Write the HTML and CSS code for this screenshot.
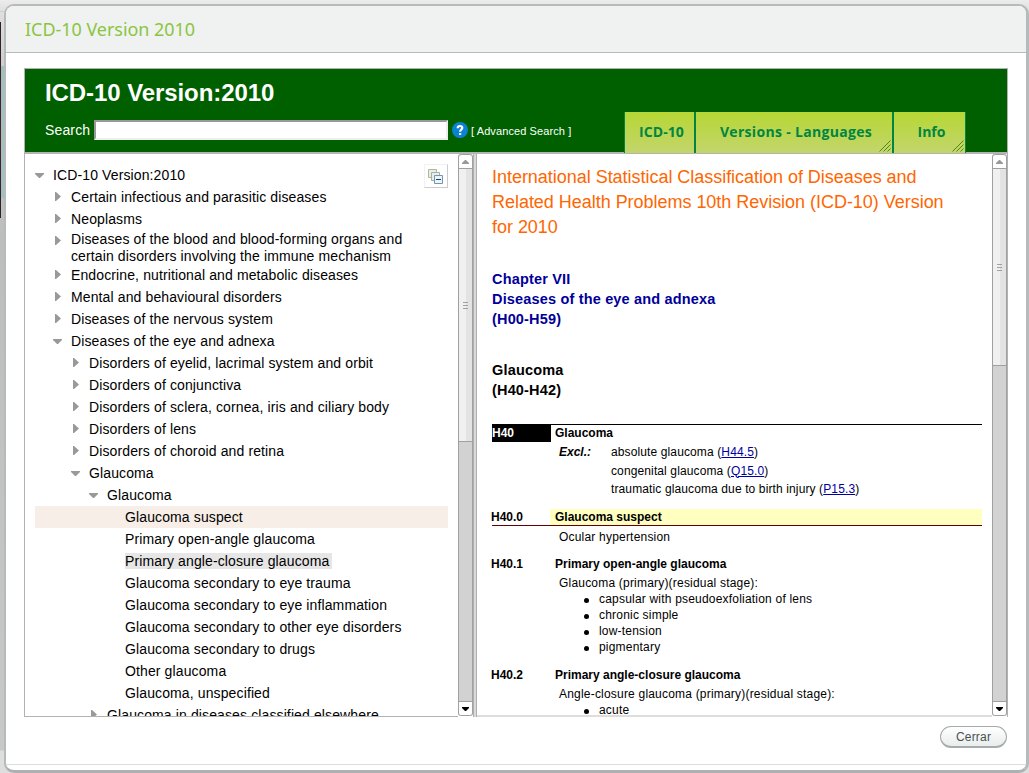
FILE: index.html
```html
<!DOCTYPE html>
<html lang="en">
<head>
<meta charset="utf-8">
<title>ICD-10 Version 2010</title>
<link rel="stylesheet" href="styles.css">
</head>
<body>
<svg width="0" height="0" class="defs">
  <symbol id="right" viewBox="0 0 9 9"><path d="M2 0h1l5 4.500-5 4.500h-1z" fill="#999"/></symbol>
  <symbol id="down" viewBox="0 0 9 9"><path d="M0 2h9v1L5 7H4L0 3z" fill="#999"/></symbol>
  <symbol id="grip" viewBox="0 0 12 12"><path d="M.5 11.500l11-11M4.500 11.500l7-7M8.500 11.500l3-3" stroke="#4c8a12" fill="none"/></symbol>
</svg>
<div class="dialog">
  <div class="dialog-head">ICD-10 Version 2010</div>
  <div class="frame">
    <header class="banner">
      <div class="left">
        <h1>ICD-10 Version:2010</h1>
        <div class="search">
          <label>Search</label><span class="field"></span>
          <svg class="help" width="16" height="16" viewBox="0 0 16 16"><circle cx="8" cy="8" r="8" fill="#0b83d0"/><path d="M5.700 6.200C5.700 3.200 10.500 3.400 10.300 6C10.200 7.600 8.100 7.600 8.100 9.800" fill="none" stroke="#fff" stroke-width="2.200"/><rect x="7" y="11" width="2.200" height="2" fill="#fff"/></svg>
          <span class="adv">[ Advanced Search ]</span>
        </div>
      </div>
      <nav class="tabs">
        <span class="tab t1">ICD-10</span>
        <span class="tab t2">Versions - Languages<svg class="grip" width="12" height="12"><use href="#grip"/></svg></span>
        <span class="tab t3">Info<svg class="grip" width="12" height="12"><use href="#grip"/></svg></span>
      </nav>
    </header>
    <div class="panes">
      <div class="tree">
        <span class="collapse"><svg width="16" height="16" viewBox="0 0 16 16"><g stroke-width="1"><path d="M.5.500h8v8h-8z" fill="#dff1f5" stroke="#b9b48a"/><path d="M3.500 3.500h8v8h-8z" fill="#dff1f5" stroke="#b0ad91"/><path d="M6.500 6.500h8v8h-8z" fill="#e9f6fb" stroke="#7a93ad"/></g><path d="M8 10h5v1H8z" fill="#14406b"/></svg></span>
        <div class="row d0"><svg class="arr"><use href="#down"/></svg><span>ICD-10 Version:2010</span></div>
        <div class="row d1"><svg class="arr r"><use href="#right"/></svg><span>Certain infectious and parasitic diseases</span></div>
        <div class="row d1"><svg class="arr r"><use href="#right"/></svg><span>Neoplasms</span></div>
        <div class="row d1 two"><svg class="arr r"><use href="#right"/></svg><span>Diseases of the blood and blood-forming organs and<br>certain disorders involving the immune mechanism</span></div>
        <div class="row d1"><svg class="arr r"><use href="#right"/></svg><span>Endocrine, nutritional and metabolic diseases</span></div>
        <div class="row d1"><svg class="arr r"><use href="#right"/></svg><span>Mental and behavioural disorders</span></div>
        <div class="row d1"><svg class="arr r"><use href="#right"/></svg><span>Diseases of the nervous system</span></div>
        <div class="row d1"><svg class="arr"><use href="#down"/></svg><span>Diseases of the eye and adnexa</span></div>
        <div class="row d2"><svg class="arr r"><use href="#right"/></svg><span>Disorders of eyelid, lacrimal system and orbit</span></div>
        <div class="row d2"><svg class="arr r"><use href="#right"/></svg><span>Disorders of conjunctiva</span></div>
        <div class="row d2"><svg class="arr r"><use href="#right"/></svg><span>Disorders of sclera, cornea, iris and ciliary body</span></div>
        <div class="row d2"><svg class="arr r"><use href="#right"/></svg><span>Disorders of lens</span></div>
        <div class="row d2"><svg class="arr r"><use href="#right"/></svg><span>Disorders of choroid and retina</span></div>
        <div class="row d2"><svg class="arr"><use href="#down"/></svg><span>Glaucoma</span></div>
        <div class="row d3"><svg class="arr"><use href="#down"/></svg><span>Glaucoma</span></div>
        <div class="row d4 selected"><span>Glaucoma suspect</span></div>
        <div class="row d4"><span>Primary open-angle glaucoma</span></div>
        <div class="row d4"><span class="hover">Primary angle-closure glaucoma</span></div>
        <div class="row d4"><span>Glaucoma secondary to eye trauma</span></div>
        <div class="row d4"><span>Glaucoma secondary to eye inflammation</span></div>
        <div class="row d4"><span>Glaucoma secondary to other eye disorders</span></div>
        <div class="row d4"><span>Glaucoma secondary to drugs</span></div>
        <div class="row d4"><span>Other glaucoma</span></div>
        <div class="row d4"><span>Glaucoma, unspecified</span></div>
        <div class="row d3"><svg class="arr r"><use href="#right"/></svg><span>Glaucoma in diseases classified elsewhere</span></div>
      </div>
      <div class="bar">
        <div class="btn"><svg width="7" height="4"><path d="M0 4V3L3 0h1l3 3v1z" fill="#999"/></svg></div>
        <div class="thumb long"><i></i><i></i><i></i></div>
        <div class="track"></div>
        <div class="btn low"><svg width="7" height="4"><path d="M0 0h7v1L4 4H3L0 1z"/></svg></div>
      </div>
      <div class="split"></div>
      <main class="content">
        <h2>International Statistical Classification of Diseases and<br>Related Health Problems 10th Revision (ICD-10) Version<br>for 2010</h2>
        <h3 class="chapter">Chapter VII<br>Diseases of the eye and adnexa<br>(H00-H59)</h3>
        <h3 class="block">Glaucoma<br>(H40-H42)</h3>
        <section class="category">
          <div class="cat"><b class="code">H40</b><b class="name">Glaucoma</b></div>
          <div class="excl"><b>Excl.:</b><p>absolute glaucoma (<a>H44.5</a>)<br>congenital glaucoma (<a>Q15.0</a>)<br>traumatic glaucoma due to birth injury (<a>P15.3</a>)</p></div>
        </section>
        <section class="entry current">
          <div class="title"><b class="code">H40.0</b><b class="name">Glaucoma suspect</b></div>
          <p>Ocular hypertension</p>
        </section>
        <section class="entry">
          <div class="title"><b class="code">H40.1</b><b class="name">Primary open-angle glaucoma</b></div>
          <p>Glaucoma (primary)(residual stage):</p>
          <ul><li>capsular with pseudoexfoliation of lens</li><li>chronic simple</li><li>low-tension</li><li>pigmentary</li></ul>
        </section>
        <section class="entry last">
          <div class="title"><b class="code">H40.2</b><b class="name">Primary angle-closure glaucoma</b></div>
          <p>Angle-closure glaucoma (primary)(residual stage):</p>
          <ul><li>acute</li></ul>
        </section>
      </main>
      <div class="bar">
        <div class="btn"><svg width="7" height="4"><path d="M0 4V3L3 0h1l3 3v1z" fill="#999"/></svg></div>
        <div class="thumb short"><i></i><i></i><i></i></div>
        <div class="track"></div>
        <div class="btn low"><svg width="7" height="4"><path d="M0 0h7v1L4 4H3L0 1z"/></svg></div>
      </div>
    </div>
  </div>
  <div class="actions"><button>Cerrar</button></div>
  <div class="foot"></div>
</div>
</body>
</html>
```
FILE: styles.css
```css
* { box-sizing: border-box; margin: 0; padding: 0; }
body {
  width: 1029px; height: 773px; overflow: hidden; padding: 4px 0 0 4px;
  font-family: "Liberation Sans", Arial, sans-serif; color: #000;
  background:
    linear-gradient(#2b2325, #4a2328 60%, #2b2325) 0 22px / 1px 196px no-repeat,
    linear-gradient(#a3bfc0, #a3bfc0) 1px 66px / 3px 132px no-repeat,
    linear-gradient(#c5d3c5, #c5d3c5) 0 11px / 1029px 1px no-repeat,
    linear-gradient(#ececec, #e0e0e0 10px, #d0d0d0 60px, #bdbdbd 240px, #c8c8c8 750px, #dedede 751px);
}
.defs { display: none; }
.dialog {
  width: 1025px; height: 769px; border: 2px solid #b5baba; border-right-width: 3px; border-bottom: 3px solid #adb1b2;
  border-radius: 10px; background: #fff; overflow: hidden; display: flex; flex-direction: column;
}
.dialog-head {
  flex: none; height: 47px; border-bottom: 1px solid #b5baba; background: #f0f2f2;
  padding: 1px 0 0 19px; line-height: 45px; font-family: "Noto Sans", sans-serif; font-size: 18px; letter-spacing: -.04px; color: #8ac53f;
}
.frame { flex: none; width: 984px; height: 649px; margin: 15px 0 0 18px; border: 1px solid #b2b2b2; border-bottom: 0; display: flex; flex-direction: column; }
.banner { flex: none; height: 83px; background: #006000; color: #fff; display: flex; }
.left { width: 599px; padding-left: 20px; }
h1 { font-size: 24px; letter-spacing: -.08px; line-height: 28px; margin-top: 10px; }
.search { display: flex; align-items: center; height: 20px; margin-top: 13px; font-size: 14px; }
.search label { width: 49px; letter-spacing: .15px; }
.field { width: 354px; height: 20px; background: #fff; border: 2px solid; border-color: #999 #eee #eee #999; }
.help { margin-left: 4px; }
.adv { margin-left: 3px; font-size: 11px; letter-spacing: .1px; padding-top: 1px; }
.tabs { display: flex; height: 41px; margin-top: 43px; }
.tab {
  position: relative; border-left: 2px solid #008542; background: linear-gradient(#b6d734, #c3d56c);
  color: #008542; font: bold 14px/40px "Open Sans", sans-serif; letter-spacing: .32px; text-align: center;
}
.t1 { width: 70px; border-left-width: 1px; letter-spacing: .08px; padding-left: 4px; }
.t2 { width: 198px; padding-left: 4px; }
.t3 { width: 74px; border-right: 1px solid #008542; letter-spacing: 0; padding-left: 4px; }
.grip { position: absolute; right: 1px; bottom: 1px; }
.panes { flex: 1; min-height: 0; display: flex; border-top: 2px solid #b4b4b4; }
.tree { position: relative; width: 433px; height: 563px; padding: 10px 10px 0; overflow: hidden; border-bottom: 1px solid #b2b2b2; font-size: 14px; letter-spacing: .12px; }
.collapse { position: absolute; left: 399px; top: 10px; width: 24px; height: 24px; border: 1px solid #f2f2f2; border-right-color: #ccc; border-bottom-color: #ccc; padding: 4px 0 0 3px; }
.collapse svg { display: block; }
.row { display: flex; height: 22px; line-height: 22px; align-items: center; white-space: nowrap; }
.arr { flex: none; width: 9px; height: 9px; margin-right: 9px; }
.arr.r { position: relative; top: -1px; }
.two { height: 34px; line-height: 17px; align-items: flex-start; }
.two .arr { margin-top: 7px; }
.two span { padding-top: 1px; }
.d1 { padding-left: 18px; }
.d2 { padding-left: 36px; }
.d3 { padding-left: 54px; }
.d4 { padding-left: 90px; }
.selected { background: #f8eee8; }
.hover { background: #e6e6e6; line-height: 16px; padding-right: 3px; }
.bar { width: 15px; height: 562px; display: flex; flex-direction: column; border: solid #a0a0a0; border-width: 0 1px; border-radius: 3px; background: #d2d2d2; }
.btn { flex: none; height: 15px; background: #fff; border-top: 1px solid #a0a0a0; border-bottom: 1px solid #a0a0a0; border-radius: 3px 3px 0 0; display: flex; align-items: center; justify-content: center; }
.low { border-radius: 0 0 3px 3px; }
.thumb { flex: none; background: linear-gradient(90deg, #f0f0f0 50%, #e3e3e3 50%); border-bottom: 1px solid #a0a0a0; display: flex; flex-direction: column; align-items: center; justify-content: center; gap: 2px; }
.thumb i { width: 5px; height: 1px; background: #a0a0a0; }
.long { height: 273px; }
.short { height: 197px; }
.track { flex: 1; }
.split { width: 4px; height: 563px; border: 1px solid #b0b0b0; border-width: 0 1px; background: #d9d9d9; }
.content { width: 515px; height: 563px; border-bottom: 2px solid #ddd; padding: 11px 10px 0 15px; overflow: hidden; font-size: 12px; letter-spacing: .2px; white-space: nowrap; }
h2 { font-size: 18px; font-weight: normal; line-height: 25px; letter-spacing: -.03px; color: #f60; }
h3 { font-size: 14.5px; line-height: 20px; letter-spacing: .17px; }
.chapter { margin-top: 29px; color: #000099; }
.block { margin-top: 31px; }
b { letter-spacing: 0; }
.category { margin-top: 24px; border-top: 1px solid #000; }
.cat { display: flex; height: 17px; line-height: 17px; }
.cat .code { width: 59px; background: #000; color: #fff; margin-right: 4px; }
.excl { display: flex; line-height: 18.500px; padding: 1px 0 0 67px; }
.excl b { width: 52px; font-style: italic; }
.excl p { letter-spacing: .12px; }
a { color: #0000a0; text-decoration: underline; }
.entry { line-height: 16px; margin-top: 11px; }
.title { display: flex; height: 17px; }
.title .code { width: 58px; text-indent: -1px; }
.title .name { flex: 1; padding-left: 5px; }
.current { margin-top: 10px; }
.current .title { border-bottom: 1px solid #600; }
.current .name { background: #ffffc0; }
.entry p { padding-left: 67px; margin-top: 2px; }
.current p { margin-top: 3px; }
.last { margin-top: 12px; }
ul { list-style: none; padding-left: 107px; }
li { position: relative; height: 16px; }
li::before { content: ""; position: absolute; left: -15px; top: 7px; width: 5px; height: 5px; border-radius: 50%; background: #000; }
.actions { flex: none; display: flex; justify-content: flex-end; padding: 9px 19px 0; height: 47px; }
button { width: 67px; height: 22px; border: 1px solid #a6abab; border-bottom-width: 2px; border-radius: 11px; background: linear-gradient(#fff, #e9edec); font: 12px "Liberation Sans", sans-serif; letter-spacing: .2px; color: #465252; }
.foot { flex: none; height: 6px; border-top: 1px solid #d8dddd; }
```
